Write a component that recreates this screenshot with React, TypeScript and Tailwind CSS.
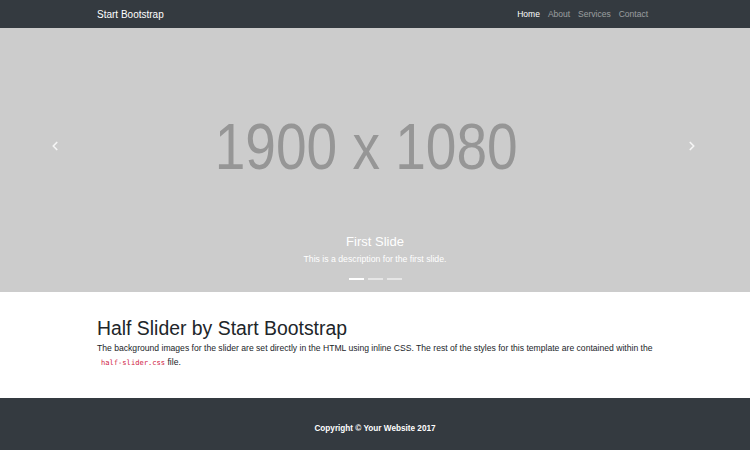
import { ChevronLeft, ChevronRight } from "lucide-react";

const font = { fontFamily: '"Liberation Sans", Arial, sans-serif' };

function Navbar() {
  return (
    <nav className="h-[28px] bg-[#343a40] flex items-center">
      <div className="w-[556px] mx-auto flex items-center justify-between">
        <span className="text-white text-[10px]">Start Bootstrap</span>
        <ul className="flex items-center gap-[8px] text-[8.5px] mr-[5px]">
          <li className="text-white">Home</li>
          <li className="text-white/50">About</li>
          <li className="text-white/50">Services</li>
          <li className="text-white/50">Contact</li>
        </ul>
      </div>
    </nav>
  );
}

function Slider() {
  return (
    <div className="relative h-[264px] bg-[#cccccc] flex items-center justify-center">
      <span className="text-[#969696] text-[64px] leading-none mr-[18px] mb-[27px] scale-x-[0.86]">1900 x 1080</span>
      <div className="absolute left-[48px] top-[111px] text-white/80">
        <ChevronLeft size={14} strokeWidth={3} />
      </div>
      <div className="absolute right-[51px] top-[111px] text-white/80">
        <ChevronRight size={14} strokeWidth={3} />
      </div>
      <div className="absolute bottom-[26px] left-0 right-0 text-center text-white">
        <h3 className="text-[13px] leading-tight">First Slide</h3>
        <p className="text-[8.7px] mt-[3px]">This is a description for the first slide.</p>
      </div>
      <div className="absolute bottom-[12px] left-0 right-0 flex justify-center gap-[4px]">
        <span className="w-[15px] h-[2px] bg-white" />
        <span className="w-[15px] h-[2px] bg-white/50" />
        <span className="w-[15px] h-[2px] bg-white/50" />
      </div>
    </div>
  );
}

function Content() {
  return (
    <section className="h-[106px] bg-white">
      <div className="w-[556px] mx-auto pt-[25px] text-[#212529]">
        <h1 className="text-[19.4px] leading-[1.2] mb-[1px]">Half Slider by Start Bootstrap</h1>
        <p className="text-[8.6px] leading-[14px]">
          The background images for the slider are set directly in the HTML using inline CSS. The rest of the styles for this template are contained within the{" "}
          <code className="text-[#d0213f] text-[7.1px] ml-[4px]" style={{ fontFamily: '"DejaVu Sans Mono", monospace' }}>
            half-slider.css
          </code>{" "}
          file.
        </p>
      </div>
    </section>
  );
}

export default function App() {
  return (
    <div className="w-[750px] h-[450px] overflow-hidden" style={font}>
      <Navbar />
      <Slider />
      <Content />
      <footer className="h-[52px] bg-[#343a40] flex items-center justify-center">
        <p className="text-white text-[8.2px] font-semibold pt-[10px]">Copyright © Your Website 2017</p>
      </footer>
    </div>
  );
}
